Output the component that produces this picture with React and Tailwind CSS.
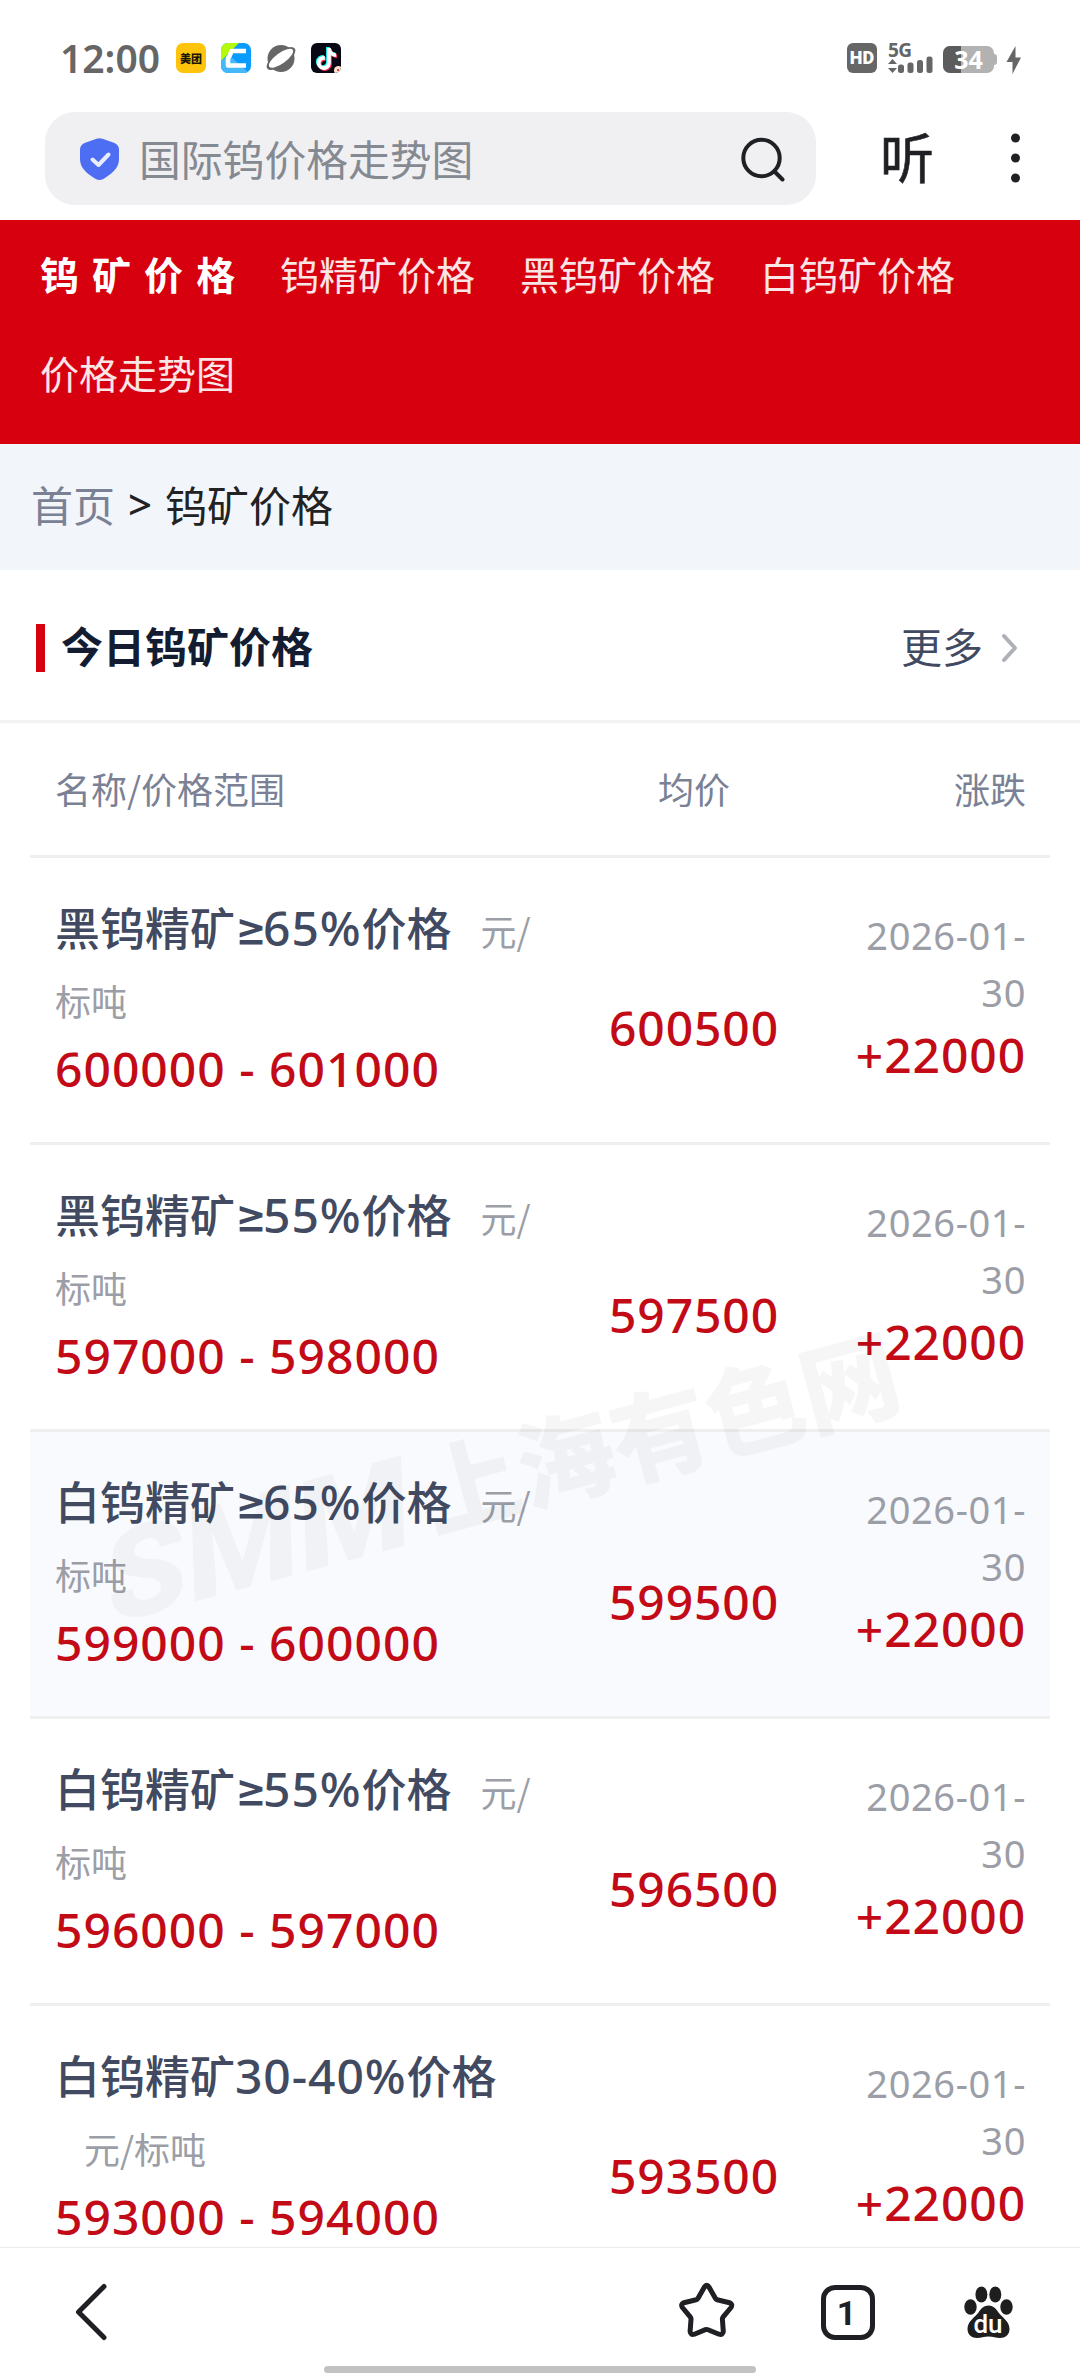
import { FaTiktok } from "react-icons/fa6";

const navItems = ["钨精矿价格", "黑钨矿价格", "白钨矿价格", "价格走势图"];

const prices = [
  { name: "黑钨精矿≥65%价格", range: "600000 - 601000", average: "600500", change: "+22000" },
  { name: "黑钨精矿≥55%价格", range: "597000 - 598000", average: "597500", change: "+22000" },
  { name: "白钨精矿≥65%价格", range: "599000 - 600000", average: "599500", change: "+22000", active: true },
  { name: "白钨精矿≥55%价格", range: "596000 - 597000", average: "596500", change: "+22000" },
  { name: "白钨精矿30-40%价格", range: "593000 - 594000", average: "593500", change: "+22000" },
];

const StatusBar = () => {
  return (
    <div className="flex h-[112px] shrink-0 items-start justify-between pl-[60px] pr-[58px] pt-[43px] text-[#666]">
      <div className="flex h-[30px] items-center">
        <span className="w-[116px] font-['Noto_Sans'] text-[39px] font-semibold leading-[30px]">12:00</span>
        <div className="flex gap-[15px]">
          <div className="flex h-[30px] w-[30px] items-center justify-center rounded-[7px] bg-[#fdc40b] font-['Noto_Sans_CJK_SC'] text-[11px] font-black leading-[16px] text-[#1c1604]">
            美团
          </div>
          <svg className="h-[30px] w-[30px]" viewBox="0 0 30 30">
            <defs>
              <clipPath id="ctrip-box">
                <rect width="30" height="30" rx="7" />
              </clipPath>
            </defs>
            <g clipPath="url(#ctrip-box)">
              <rect width="30" height="30" fill="#0a9bff" />
              <path d="M0 0H18L0 18Z" fill="#b4fb0a" />
              <path d="M0 18L8 12L28 30H0Z" fill="#45b8fb" />
            </g>
            <path d="M25 8H10.500Q8.500 14 7 15V22.500H25" fill="none" stroke="#fff" strokeWidth="4.600" strokeLinejoin="round" />
          </svg>
          <svg className="h-[30px] w-[30px]" viewBox="0 0 30 30">
            <circle cx="15" cy="15.500" r="13.500" fill="#666" />
            <ellipse cx="15" cy="15.500" rx="17" ry="7" transform="rotate(-36 15 15.500)" fill="#666" />
            <ellipse cx="15" cy="15.200" rx="14.500" ry="5.300" transform="rotate(-36 15 15.200)" fill="#fff" />
          </svg>
          <div className="relative h-[30px] w-[30px] overflow-hidden rounded-[6px] bg-[#080713]">
            <FaTiktok className="absolute left-[4px] top-[4px] h-[22px] w-[21px] text-[#25f4ee]" />
            <FaTiktok className="absolute left-[6px] top-[6px] h-[22px] w-[21px] text-[#fe2c55]" />
            <FaTiktok className="absolute left-[5px] top-[5px] h-[22px] w-[21px] text-white" />
            <span className="absolute -bottom-[2px] -right-[2px] h-[9px] w-[9px] rounded-full bg-[#ffe3cf]" />
            <span className="absolute bottom-[2px] right-[2px] h-[2px] w-[2px] bg-[#e8483c]" />
          </div>
        </div>
      </div>
      <div className="flex h-[30px] items-center">
        <div className="flex h-[30px] w-[30px] items-center justify-center rounded-[6px] bg-[#666] font-['Roboto'] text-[18px] font-black leading-[24px] text-white">
          HD
        </div>
        <svg className="ml-[11px] h-[30px] w-[46px] overflow-visible" viewBox="0 0 46 30" fill="#666">
          <text x="0" y="14" fontFamily="Noto Sans" fontSize="19" fontWeight="700" textLength="24">5G</text>
          <path d="M4.500 16L9 21H0ZM4.500 30L0 25H9Z" />
          <rect x="10" y="21.500" width="6" height="8.500" rx="2.500" />
          <rect x="19.500" y="19.500" width="6" height="10.500" rx="2.500" />
          <rect x="29" y="17" width="6" height="13" rx="2.500" />
          <rect x="38.500" y="13.500" width="6" height="16.500" rx="2.500" />
        </svg>
        <div className="relative ml-[9px] mt-[3px] flex h-[27px] w-[51px] items-center justify-center rounded-[7px] bg-[#b2b2b2] font-['Noto_Sans'] text-[25px] font-bold leading-[27px] text-white">
          <span className="absolute left-0 top-0 h-full w-[18px] rounded-l-[7px] bg-[#5c5c5c]" />
          <span className="relative">34</span>
        </div>
        <span className="mt-[3px] h-[11px] w-[3px] rounded-r-[4px] bg-[#b2b2b2]" />
        <svg className="ml-[9px] mt-[3px] h-[28px] w-[16px]" viewBox="0 0 16 28" fill="#666">
          <path d="M9.500 0L0.500 16H6.500V28L15 11.500H9.500Z" />
        </svg>
      </div>
    </div>
  );
};

const SearchBar = () => {
  return (
    <div className="flex h-[108px] shrink-0 items-start pl-[45px]">
      <div className="flex h-[93px] w-[771px] items-center rounded-[30px] bg-[#f0f0f3] pl-[34px] pr-[30px]">
        <svg className="mt-[1px] h-[44px] w-[41px]" viewBox="0 0 41 44">
          <path
            d="M17.500 1.700Q20.500 .6 23.500 1.700L35.500 6Q40 8 40 12.500V22C40 30 35 35 26 41Q20.500 45 15 41C6 35 1 30 1 22V12.500Q1 8 5.500 6Z"
            fill="#4d6ef2"
          />
          <path d="M13.500 22.500L19.500 28L29.500 17.500" fill="none" stroke="#e9edff" strokeWidth="4" strokeLinecap="round" strokeLinejoin="round" />
        </svg>
        <span className="-mt-[1px] ml-[19px] text-[41.800px] leading-[60px] text-[#858991]">国际钨价格走势图</span>
        <svg className="ml-auto h-[46px] w-[46px]" viewBox="0 0 46 46" fill="none" stroke="#1f2024" strokeWidth="4" strokeLinecap="round">
          <circle cx="21.500" cy="22" r="18.200" />
          <path d="M35 36L42.500 43.500" />
        </svg>
      </div>
      <span className="ml-[64px] mt-[11px] text-[54px] leading-[66px] text-[#1f2024] [-webkit-text-stroke:0.6px_#1f2024]">听</span>
      <svg className="ml-[76px] mt-[21px] h-[52px] w-[12px]" viewBox="0 0 12 52" fill="#1f2024">
        <circle cx="5.500" cy="5" r="4.500" />
        <circle cx="5.500" cy="25" r="4.500" />
        <circle cx="5.500" cy="45" r="4.500" />
      </svg>
    </div>
  );
};

// Latin runs are set a bit larger than the Chinese characters around them
const ProductName = ({ name }) => {
  return (
    <span className="font-medium text-[#414a60]">
      {name.split(/(≥|[0-9%-]+)/).map((part, index) => {
        if (part === "≥") {
          return (
            <span key={index} className="font-['Inter'] text-[48px] leading-0 tracking-[-4px]">{part}</span>
          );
        }
        return index % 2 ? (
          <span key={index} className="whitespace-nowrap font-['Noto_Sans'] text-[48px] leading-0 tracking-[0.9px]">{part}</span>
        ) : (
          part
        );
      })}
    </span>
  );
};

const PriceRow = ({ item }) => {
  return (
    <div
      className={`grid h-[287px] grid-cols-[500px_278px_1fr] border-b-[3px] border-[#efeff0] pl-[25px] pr-[24px] ${item.active ? "bg-[#f9fafe]" : ""}`}
    >
      <div className="pt-[34px]">
        <div className="text-[45px] leading-[70px]">
          <ProductName name={item.name} />
          <span className="ml-[29px] text-[36px] leading-0 text-[#9b9ea6]">元/标吨</span>
        </div>
        <div className="font-['Noto_Sans'] text-[48px] font-medium leading-[74px] tracking-[1px] text-[#c30a17]">{item.range}</div>
      </div>
      <div className="pt-[137px] text-center font-['Noto_Sans'] text-[48px] font-medium leading-[66px] tracking-[0.9px] text-[#c30a17]">
        {item.average}
      </div>
      <div className="pt-[49px] text-right font-['Noto_Sans']">
        <div className="text-[38px] leading-[56.500px] tracking-[0.6px] text-[#9b9ea6]">2026-01-30</div>
        <div className="text-[48px] font-medium leading-[69px] tracking-[0.9px] text-[#c30a17]">{item.change}</div>
      </div>
    </div>
  );
};

const Watermark = () => {
  return (
    <svg className="pointer-events-none absolute left-0 top-[1300px] h-[360px] w-[1080px]" viewBox="0 0 1080 360">
      <g transform="translate(108 325) rotate(-15)">
        <text
          transform="skewX(-13)"
          fontFamily="Roboto"
          fontSize="124"
          fontWeight="900"
          fill="#000"
          fillOpacity="0.03"
          textLength="314"
          lengthAdjust="spacingAndGlyphs"
        >
          SMM
        </text>
        <text x="338" y="-5" fontFamily="Noto Sans CJK SC" fontSize="98" fontWeight="900" fill="#000" fillOpacity="0.036" textLength="490">
          上海有色网
        </text>
      </g>
    </svg>
  );
};

const BottomBar = () => {
  return (
    <div className="relative flex h-[129px] shrink-0 items-start border-t border-[#ebebec] bg-white pl-[72px] pt-[33px] text-[#1f2024]">
      <svg className="h-[60px] w-[40px]" viewBox="0 0 40 60" fill="none" stroke="currentColor" strokeWidth="5" strokeLinecap="round" strokeLinejoin="round">
        <path d="M32 5.500L6.500 31L32 56.500" />
      </svg>
      <svg className="ml-[566px] h-[60px] w-[58px]" viewBox="0 0 58 60" fill="none" stroke="currentColor" strokeWidth="5" strokeLinejoin="round">
        <path d="M26.300 6.200Q28.700 2.500 31.100 6.200L37.500 17.500Q38 18.500 39.200 18.800L51.500 21.700Q55 23 53 26.500L45 36.200Q44.300 37.200 44.400 38.400L45.300 50.500Q44.800 54.500 41 53.200L30 48.700Q28.700 48.200 27.400 48.700L16.400 53.200Q12.600 54.500 12.100 50.500L13 38.400Q13.100 37.200 12.400 36.200L4.400 26.500Q2.400 23 5.900 21.700L18.200 18.800Q19.400 18.500 19.900 17.500Z" />
      </svg>
      <div className="ml-[85px] mt-[4px] flex h-[55px] w-[54px] items-center justify-center rounded-[14px] border-[5px] border-[#1f2024] pr-[3px] font-['Roboto'] text-[34px] font-bold leading-[44px]">
        1
      </div>
      <svg className="ml-[87px] mt-[4px] h-[56px] w-[54px]" viewBox="0 0 54 56" fill="#1e1e1e">
        <ellipse cx="8.500" cy="22" rx="6.200" ry="7.700" />
        <ellipse cx="19.400" cy="9.500" rx="6" ry="8" />
        <ellipse cx="33.300" cy="9.500" rx="6" ry="8" />
        <ellipse cx="44.500" cy="22" rx="6.200" ry="7.700" />
        <path d="M26.500 20.500C31 20.500 34 23.500 36.500 27.500C40 32.500 47.500 36 47.500 44C47.500 50 43 53 38 53C34 53 31 51.500 26.500 51.500C22 51.500 19 53 15 53C10 53 5.500 50 5.500 44C5.500 36 13 32.500 16.500 27.500C19 23.500 22 20.500 26.500 20.500Z" />
        <text x="26" y="48" textAnchor="middle" fontFamily="Roboto" fontSize="26" fontWeight="500" fill="#fff">du</text>
      </svg>
      <div className="absolute bottom-[3px] left-[324px] h-[7px] w-[432px] rounded-full bg-[#c2c2c2]" />
    </div>
  );
};

const App = () => {
  return (
    <div className="relative flex h-[2376px] w-[1080px] flex-col overflow-hidden bg-white font-['Noto_Sans_CJK_SC','Noto_Sans',sans-serif]">
      <StatusBar />
      <SearchBar />
      <main className="min-h-0 flex-1 overflow-hidden">
        <nav className="flex h-[224px] flex-wrap content-start gap-x-[45px] bg-[#d7000f] pl-[40px] pr-[60px] pt-[4px] text-[39px] leading-[99px] text-white/90">
          <span className="w-[195px] whitespace-nowrap font-bold text-white [word-spacing:4.200px]">钨 矿 价 格</span>
          {navItems.map((item) => (
            <span key={item}>{item}</span>
          ))}
        </nav>
        <div className="flex h-[126px] items-center bg-[#f2f5fa] pb-[7px] pl-[31px] text-[42px] leading-[60px] text-[#222]">
          <span className="text-[#7a8194]">首页</span>
          <span className="mx-[12px] w-[26px] text-center font-['Noto_Sans'] text-[42px] font-medium">&gt;</span>
          <span>钨矿价格</span>
        </div>
        <div className="flex h-[153px] items-center border-b-[3px] border-[#f2f2f2] pl-[36px] pr-[60px]">
          <span className="mt-[5px] h-[48px] w-[9px] bg-[#d7000f]" />
          <h2 className="-mt-[1px] ml-[16px] text-[42px] font-bold leading-[60px] text-[#131c31]">今日钨矿价格</h2>
          <span className="-mt-[1px] ml-auto text-[41px] leading-[60px] text-[#414a60]">更多</span>
          <svg className="ml-[17px] mt-[5px] h-[32px] w-[20px]" viewBox="0 0 20 32" fill="none" stroke="#adb0b5" strokeWidth="4" strokeLinecap="round" strokeLinejoin="round">
            <path d="M4 4L15 16L4 28" />
          </svg>
        </div>
        <div className="mx-[30px]">
          <div className="grid h-[135px] grid-cols-[500px_278px_1fr] border-b-[3px] border-[#efeff0] pl-[25px] pr-[24px] text-[36px] leading-[130px] text-[#7a8194]">
            <span>名称/价格范围</span>
            <span className="text-center">均价</span>
            <span className="text-right">涨跌</span>
          </div>
          {prices.map((item) => (
            <PriceRow key={item.name} item={item} />
          ))}
        </div>
      </main>
      <Watermark />
      <BottomBar />
    </div>
  );
};

export default App;
